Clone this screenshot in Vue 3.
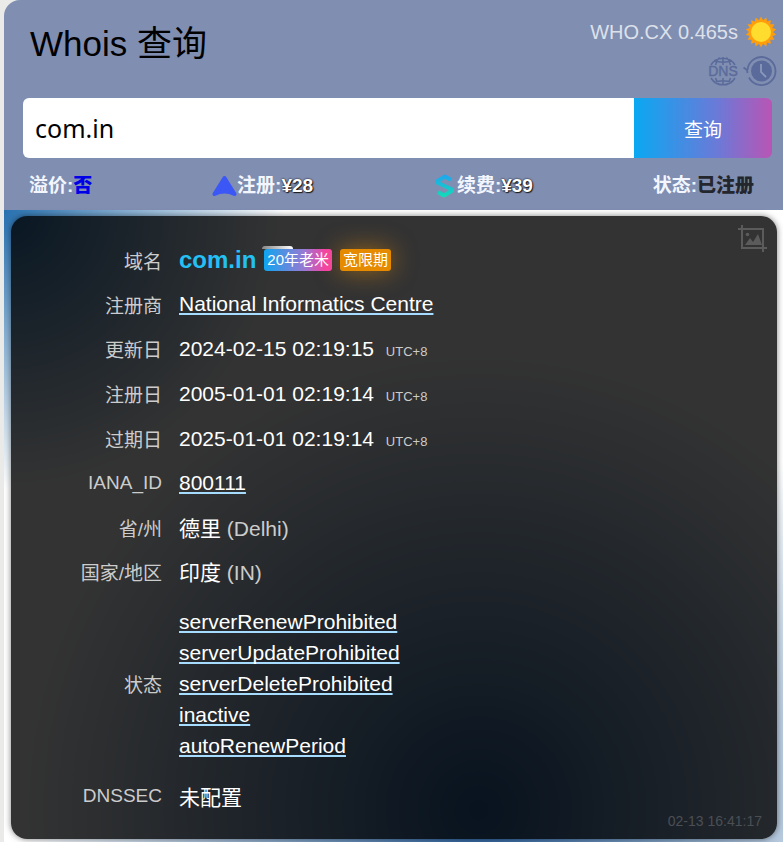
<template>
  <div class="page">
    <header class="head">
      <div class="top">
        <h1>Whois 查询</h1>
        <div class="tools">
          <div class="tool-row">
            <span class="timing">WHO.CX 0.465s</span>
            <button class="icon-btn" aria-label="Theme">
              <svg width="32" height="32" viewBox="-16 -16 32 32">
                <polygon :points="sunPoints" fill="#ff9d0b" />
                <circle r="10" fill="#ffdc2e" />
              </svg>
            </button>
          </div>
          <div class="tool-row icons">
            <a href="#dns" class="icon-btn" aria-label="DNS">
              <svg width="32" height="32" viewBox="0 0 32 32" fill="none" stroke="#5a6b9b" stroke-width="1.500">
                <path d="M4 10A14 14 0 0 1 28 10M16 2v8M12.500 2.500Q9.500 5 8.500 10M19.500 2.500Q22.500 5 23.500 10M7 5.500Q16 9 25 5.500" />
                <path d="M4 23A14 14 0 0 0 28 23M16 30v-7M12.500 30Q9.500 27 8.500 23M19.500 30Q22.500 27 23.500 23M7 27.500Q16 24 25 27.500" />
                <text x="16" y="21" class="dns-text">DNS</text>
              </svg>
            </a>
            <a href="#history" class="icon-btn" aria-label="History">
              <svg width="34" height="32" viewBox="0 0 34 32" fill="none" stroke="#5a6b9b" stroke-width="1.800">
                <path d="M4.500 15A14 14 0 1 1 6 22.500" />
                <path d="M0.500 12.500l3.500 2.500 0.500 3" />
                <circle cx="18.500" cy="16" r="10.500" fill="#5a6b9b" stroke="none" />
                <path d="M18 9v8l5 5" stroke="#8a98bb" />
              </svg>
            </a>
          </div>
        </div>
      </div>

      <form class="search" @submit.prevent>
        <input v-model="domain" type="text" aria-label="域名" />
        <button type="submit">查询</button>
      </form>

      <div class="stats">
        <span class="stat">溢价:<b class="no">否</b></span>
        <span class="stat">
          <svg width="25" height="22" viewBox="0 0 25 22">
            <path d="M12.500 3L22.500 19Q12.500 14 2.500 19Z" fill="#3b57f5" stroke="#3b57f5" stroke-width="4" stroke-linejoin="round" />
          </svg>注册:<b class="price">¥28</b>
        </span>
        <span class="stat">
          <svg width="24" height="24" viewBox="0 0 24 24">
            <defs>
              <linearGradient id="renew" gradientUnits="userSpaceOnUse" x1="0" y1="0" x2="0" y2="24">
                <stop offset="0" stop-color="#1fa2f2" />
                <stop offset="1" stop-color="#12dfb4" />
              </linearGradient>
            </defs>
            <path d="M18 6L12 2.500L3 8L20 16L11 21.500L5 18" fill="none" stroke="url(#renew)" stroke-width="4" stroke-linejoin="bevel" />
          </svg>续费:<b class="price">¥39</b>
        </span>
        <span class="stat">状态:<b class="taken">已注册</b></span>
      </div>
    </header>

    <main class="body">
      <section class="card">
        <button class="shot" aria-label="Save image">
          <svg width="30" height="28" viewBox="0 0 30 28" fill="none" stroke="#5b5b5b" stroke-width="2">
            <path d="M4 0v23h25M0 4h25v23" />
            <path d="M7 20l5-7 3 4 5-8 4 11z" fill="#5b5b5b" stroke="none" />
            <circle cx="9.500" cy="9.500" r="1.800" fill="#5b5b5b" stroke="none" />
          </svg>
        </button>

        <table>
          <tbody>
            <tr>
              <th scope="row">域名</th>
              <td>
                <div class="name">
                  <strong>com.in</strong>
                  <span class="tag age">20年老米</span>
                  <span class="tag grace">宽限期</span>
                </div>
              </td>
            </tr>
            <tr v-for="row in rows" :key="row.label" :class="row.type">
              <th scope="row">{{ row.label }}</th>
              <td>
                <template v-if="row.links">
                  <div v-for="link in row.links" :key="link">
                    <a :href="'#' + link">{{ link }}</a>
                  </div>
                </template>
                <template v-else>
                  {{ row.value }}
                  <small v-if="row.zone">{{ row.zone }}</small>
                  <span v-if="row.note" class="note">{{ row.note }}</span>
                </template>
              </td>
            </tr>
          </tbody>
        </table>

        <time class="stamp">02-13 16:41:17</time>
      </section>
    </main>
  </div>
</template>

<script setup>
import { ref } from 'vue'

const domain = ref('com.in')

const rows = [
  { label: '注册商', links: ['National Informatics Centre'] },
  { label: '更新日', value: '2024-02-15 02:19:15', zone: 'UTC+8', type: 'date' },
  { label: '注册日', value: '2005-01-01 02:19:14', zone: 'UTC+8', type: 'date' },
  { label: '过期日', value: '2025-01-01 02:19:14', zone: 'UTC+8', type: 'date' },
  { label: 'IANA_ID', links: ['800111'] },
  { label: '省/州', value: '德里', note: '(Delhi)' },
  { label: '国家/地区', value: '印度', note: '(IN)' },
  {
    label: '状态',
    type: 'status',
    links: ['serverRenewProhibited', 'serverUpdateProhibited', 'serverDeleteProhibited', 'inactive', 'autoRenewPeriod'],
  },
  { label: 'DNSSEC', value: '未配置' },
]

// 18 rays, alternating outer and inner radius
const sunPoints = Array.from({ length: 36 }, (_, i) => {
  const r = i % 2 ? 12 : 15.5
  const a = (i * Math.PI) / 18
  return `${(r * Math.sin(a)).toFixed(2)},${(-r * Math.cos(a)).toFixed(2)}`
}).join(' ')
</script>

<style>
body { margin: 0; background: #eaeae8; }
</style>

<style scoped>
.page { margin-left: 4px; min-height: 100vh; display: flex; flex-direction: column; font-family: "Liberation Sans", "Noto Sans CJK SC", sans-serif; }
button { border: 0; font-family: inherit; cursor: pointer; }
svg { display: block; }

.head { background: #808eb1; border-radius: 16px 0 0 0; }
.top { display: flex; justify-content: space-between; height: 98px; padding: 0 6px 0 26px; box-sizing: border-box; }
h1 { margin: 18px 0 0; font-size: 35px; line-height: 52px; font-weight: 400; color: #000; }
.tools { padding-top: 16px; }
.tool-row { display: flex; justify-content: flex-end; align-items: center; gap: 7px; height: 32px; }
.tool-row.icons { gap: 4px; margin-top: 7px; }
.timing { font-size: 20px; color: #dde1ea; }
.icon-btn { padding: 0; background: none; }
.dns-text { font-size: 14px; text-anchor: middle; fill: #5a6b9b; stroke: #5a6b9b; stroke-width: 0.4; }

.search { display: flex; height: 60px; margin: 0 11px 0 19px; border-radius: 6px; overflow: hidden; }
.search input { flex: 1; min-width: 0; padding: 0 12px; border: 0; outline: 0; background: #fff; font-family: "Noto Sans", sans-serif; font-size: 25px; color: #000; }
.search button { width: 138px; font-size: 19px; color: #fff; background: linear-gradient(90deg, #0aa8f2, #6a7ad8 60%, #b955b4); }

.stats { display: flex; justify-content: space-between; height: 48px; padding: 4px 29px 0 25px; }
.stat { display: flex; align-items: center; font-size: 19px; font-weight: 700; line-height: 28px; color: #f3f6ff; }
.no { color: #0000e6; }
.price { color: #fff; text-shadow: 0 0 2px #000, 1px 1px 1px #222; }
.taken { color: #23262d; }

.body { flex: 1; padding: 6px 6px 2px 7px; background: radial-gradient(circle at 0 0, #2871b0, rgba(255,255,255,0) 280px), radial-gradient(circle at 475px 600px, #285f9b, #fff 460px); }
.card { position: relative; padding: 22px 0 21px; border-radius: 16px; background: rgba(0,0,0,0.8); box-shadow: 0 0 6px rgba(0,0,0,0.5); }
.shot { position: absolute; top: 9px; right: 9px; padding: 0; background: none; }

table { width: 100%; border-collapse: collapse; }
th, td { height: 44px; padding: 0; }
th { width: 151px; padding-right: 17px; font-size: 19px; font-weight: 400; text-align: right; color: #ccc; }
td { font-size: 21px; color: #fff; }
.date th, .date td { height: 45px; }
.status td { padding: 13px 0; line-height: 31px; }
td a { color: #fff; text-decoration: underline 2px #a6dcff; text-underline-offset: 2px; text-decoration-skip-ink: none; }
small { margin-left: 6px; font-size: 13px; color: #ccc; }
.note { color: #ccc; }

.name { display: flex; align-items: center; gap: 8px; }
strong { font-size: 24px; color: #24c0f5; }
.tag { position: relative; padding: 0 3px; border-radius: 3px; font-size: 15px; line-height: 22px; }
.age { background: linear-gradient(90deg, #0fa5f0, #9a78d2 60%, #f542a4 90%); }
.age::before { content: ""; position: absolute; top: -3px; left: -2px; width: 31px; height: 3px; border-radius: 3px 3px 0 0; background: linear-gradient(90deg, #888, #fff); }
.grace { background: #e68a00; box-shadow: 0 0 24px rgba(255,153,0,0.5); }
.stamp { position: absolute; right: 15px; bottom: 9px; font-size: 14px; line-height: 18px; color: #4b4f54; }
</style>
